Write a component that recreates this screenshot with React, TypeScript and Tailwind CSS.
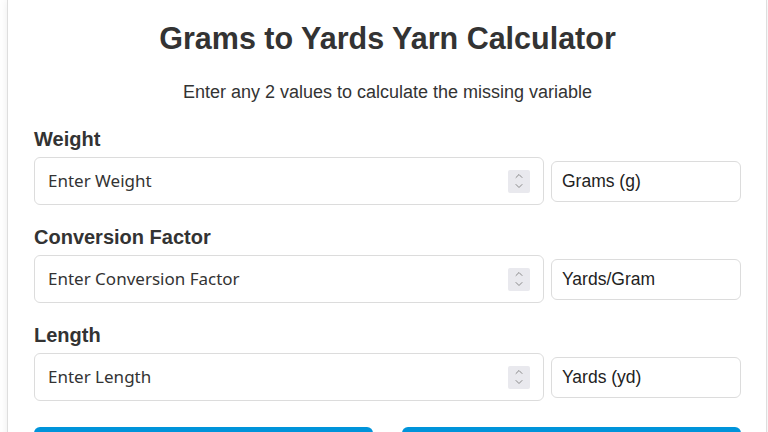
import { ChevronUp, ChevronDown } from "lucide-react";

type Field = { label: string; placeholder: string; unit: string };

const fields: Field[] = [
  { label: "Weight", placeholder: "Enter Weight", unit: "Grams (g)" },
  { label: "Conversion Factor", placeholder: "Enter Conversion Factor", unit: "Yards/Gram" },
  { label: "Length", placeholder: "Enter Length", unit: "Yards (yd)" },
];

function FieldRow({ field }: { field: Field }) {
  return (
    <div className="mb-[21px]">
      <div className="text-[20px] font-bold leading-[22px] text-[#333] mb-[7px]">{field.label}</div>
      <div className="flex items-center gap-[7px]">
        <div className="flex h-[48px] w-[510px] items-center rounded-[6px] border border-[#dcdcdc] pl-[13px] pr-[13px]">
          <input
            type="text"
            placeholder={field.placeholder}
            className="min-w-0 flex-1 bg-transparent text-[17px] text-[#333] outline-none placeholder:text-[#333] [font-family:'Noto_Sans',sans-serif]"
          />
          <div className="flex h-[23px] w-[22px] flex-col items-center justify-center rounded-[2px] bg-[#e9e9ee] text-[#8a8a8a]">
            <ChevronUp size={12} strokeWidth={2} className="-mb-[1px]" />
            <ChevronDown size={12} strokeWidth={2} className="-mt-[1px]" />
          </div>
        </div>
        <div className="flex h-[41px] w-[190px] items-center rounded-[6px] border border-[#dcdcdc] px-[10px] text-[17.5px] text-[#222]">
          {field.unit}
        </div>
      </div>
    </div>
  );
}

export default function App() {
  return (
    <div className="min-h-[432px] bg-white [font-family:'Liberation_Sans',Arial,sans-serif]">
      <div className="ml-[7px] w-[760px] border-x border-[#dedede] bg-white pl-[26px] pr-[25px] pt-[20px] shadow-[0_0_8px_rgba(0,0,0,0.08)]">
        <h1 className="text-center text-[30.5px] font-bold leading-[36px] text-[#333]">
          Grams to Yards Yarn Calculator
        </h1>
        <p className="mt-[25px] mb-[25px] text-center text-[18px] leading-[22px] text-[#333]">
          Enter any 2 values to calculate the missing variable
        </p>
        {fields.map((f) => (
          <FieldRow key={f.label} field={f} />
        ))}
        <div className="grid grid-cols-2 gap-[29px] pt-[5px]">
          <button className="h-[44px] rounded-[6px] bg-[#0094da] text-[18px] font-bold text-white">Calculate</button>
          <button className="h-[44px] rounded-[6px] bg-[#0094da] text-[18px] font-bold text-white">Reset</button>
        </div>
      </div>
    </div>
  );
}
